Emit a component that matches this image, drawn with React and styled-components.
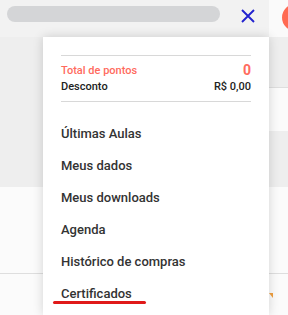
import styled, { createGlobalStyle } from "styled-components"

const Global = createGlobalStyle`
  html, body { margin: 0; padding: 0; background: #fff; }
  body { font-family: Roboto, "Liberation Sans", sans-serif; width: 288px; height: 315px; overflow: hidden; }
`

const Page = styled.div`
  width: 288px;
  height: 315px;
  display: flex;
  flex-direction: column;
  overflow: hidden;
`

const TopBar = styled.div`
  display: flex;
  height: 37px;
  flex-shrink: 0;
`

const SearchArea = styled.div`
  width: 269px;
  background: #f2f2f2;
  display: flex;
  align-items: flex-start;
  padding: 6px 0 0 7px;
  box-sizing: border-box;
  gap: 21px;
`

const SearchPill = styled.div`
  width: 213px;
  height: 16px;
  border-radius: 8px;
  background: #d4d5d7;
`

const CloseBtn = styled.div`
  margin-top: 3px;
  width: 14px;
  height: 14px;
  display: flex;
`

const AvatarSide = styled.div`
  flex: 1;
  background: #fafafa;
  position: relative;
  overflow: hidden;
`

const Avatar = styled.div`
  position: absolute;
  left: 13px;
  top: 4px;
  width: 27px;
  height: 27px;
  border-radius: 50%;
  background: #ff6a52;
`

const Body = styled.div`
  flex: 1;
  display: flex;
`

const SideCol = styled.div`
  width: ${p => p.$w}px;
  display: flex;
  flex-direction: column;
  flex-shrink: 0;
`

const Band = styled.div`
  height: ${p => p.$h}px;
  flex-shrink: 0;
  background: ${p => (p.$gray ? "#eeeeee" : "#fbfbfb")};
  border-bottom: ${p => (p.$line ? "1px solid #dedede" : "none")};
  box-sizing: border-box;
  position: relative;
`

const Rest = styled.div`
  flex: 1;
  background: #fbfbfb;
  position: relative;
`

const Peek = styled.div`
  position: absolute;
  left: 0;
  top: 19px;
  width: 0;
  height: 0;
  border-top: 5px solid #f0a040;
  border-left: 4px solid transparent;
`

const Panel = styled.div`
  width: 226px;
  flex-shrink: 0;
  background: #fff;
  box-shadow: 0 0 10px rgba(0, 0, 0, 0.16);
  padding: 18px 18px 0;
  box-sizing: border-box;
  position: relative;
  z-index: 2;
`

const Points = styled.div`
  border-top: 1px solid #d8d8d8;
  border-bottom: 1px solid #d8d8d8;
  padding: 6px 0 7px;
`

const PointRow = styled.div`
  display: flex;
  justify-content: space-between;
  align-items: center;
  height: 16px;
  font-size: 11px;
  font-weight: 500;
  color: ${p => (p.$accent ? "#ff6b5e" : "#222")};
`

const Big = styled.span`
  font-size: 14px;
  font-weight: 700;
`

const Menu = styled.ul`
  list-style: none;
  margin: 16px 0 0;
  padding: 0;
`

const Item = styled.li`
  height: 32px;
  line-height: 32px;
  font-size: 13px;
  font-weight: 500;
  color: #333;
  position: relative;
`

const Underline = styled.span`
  position: absolute;
  left: -8px;
  top: 23px;
  width: 93px;
  height: 3px;
  border-radius: 2px;
  background: #e01919;
`

const items = ["Últimas Aulas", "Meus dados", "Meus downloads", "Agenda", "Histórico de compras", "Certificados"]

export default function App() {
  return (
    <Page>
      <Global />
      <TopBar>
        <SearchArea>
          <SearchPill />
          <CloseBtn>
            <svg width="14" height="14" viewBox="0 0 14 14">
              <path d="M1 1 L13 13 M13 1 L1 13" stroke="#2323cf" strokeWidth="1.9" fill="none" />
            </svg>
          </CloseBtn>
        </SearchArea>
        <AvatarSide>
          <Avatar />
        </AvatarSide>
      </TopBar>
      <Body>
        <SideCol $w={43}>
          <Band $h={150} $gray />
          <Band $h={87} $line />
          <Rest />
        </SideCol>
        <Panel>
          <Points>
            <PointRow $accent>
              <span>Total de pontos</span>
              <Big>0</Big>
            </PointRow>
            <PointRow>
              <span>Desconto</span>
              <span>R$ 0,00</span>
            </PointRow>
          </Points>
          <Menu>
            {items.map(t => (
              <Item key={t}>
                {t}
                {t === "Certificados" && <Underline />}
              </Item>
            ))}
          </Menu>
        </Panel>
        <SideCol $w={19}>
          <Band $h={51} $gray $line />
          <Band $h={43} />
          <Band $h={56} $gray />
          <Band $h={87} $line />
          <Rest>
            <Peek />
          </Rest>
        </SideCol>
      </Body>
    </Page>
  )
}
